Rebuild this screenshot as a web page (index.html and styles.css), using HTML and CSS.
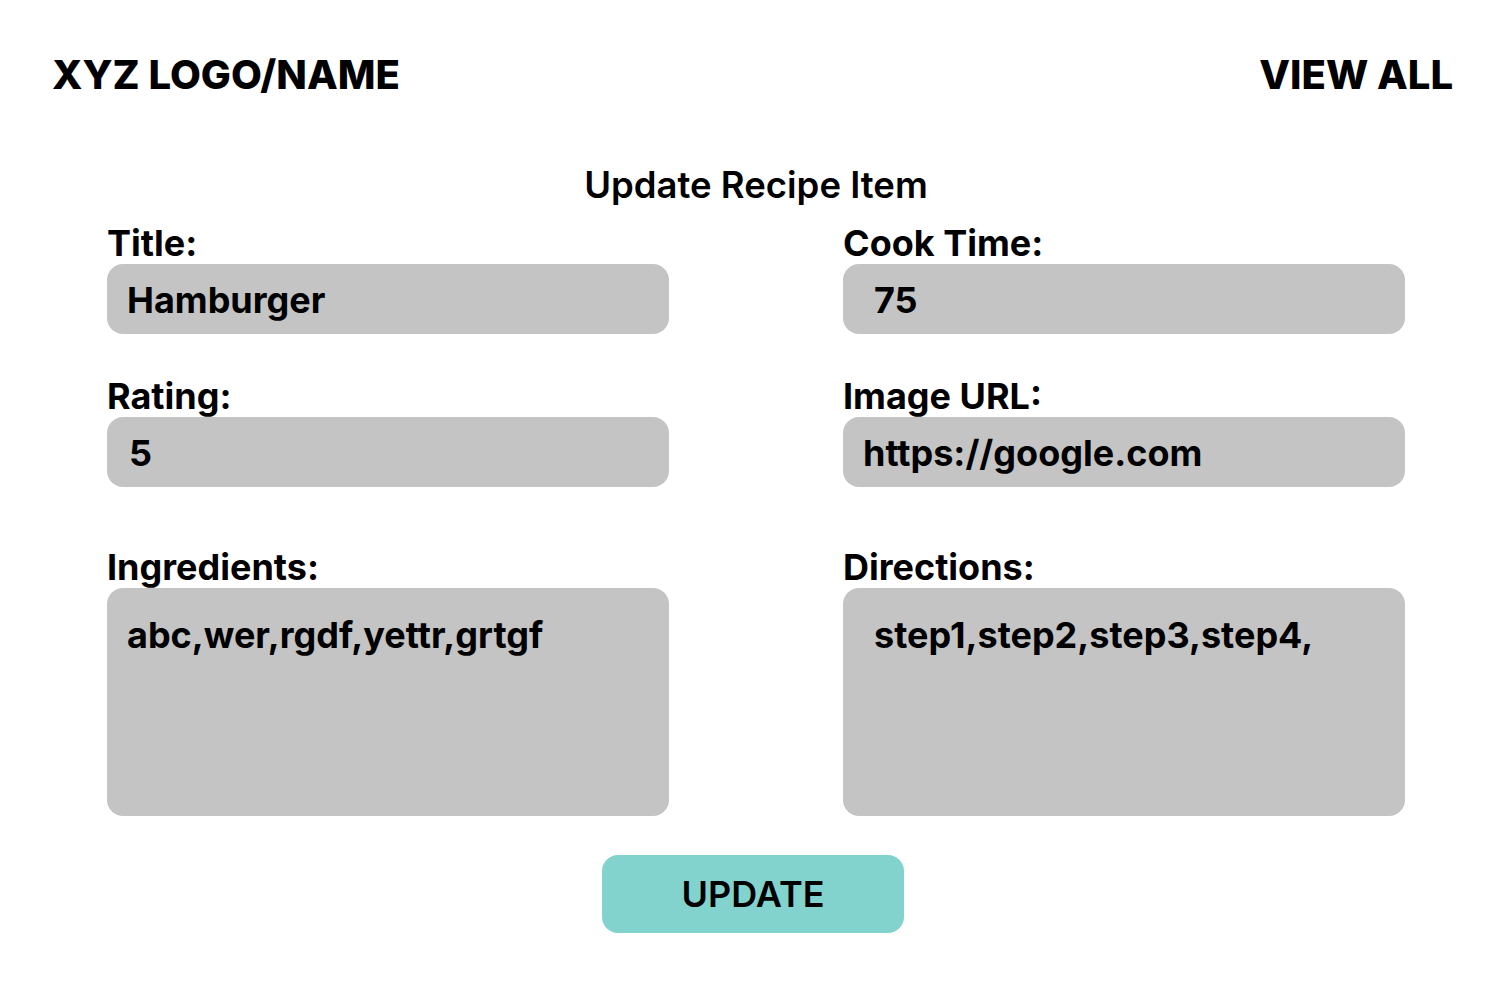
FILE: index.html
```html
<!DOCTYPE html>
<html lang="en">
<head>
<meta charset="utf-8">
<title>Update Recipe Item</title>
<link rel="stylesheet" href="styles.css">
</head>
<body>
<header class="topbar">
  <div class="logo">XYZ LOGO/NAME</div>
  <a class="view-all" href="#">VIEW ALL</a>
</header>
<main class="page">
  <h1 class="form-title">Update Recipe Item</h1>
  <form class="recipe-form">
    <div class="field">
      <label class="label">Title:</label>
      <div class="input">Hamburger</div>
    </div>
    <div class="field">
      <label class="label">Cook Time:</label>
      <div class="input input-wide">75</div>
    </div>
    <div class="field">
      <label class="label">Rating:</label>
      <div class="input input-num">5</div>
    </div>
    <div class="field">
      <label class="label">Image URL:</label>
      <div class="input">https://google.com</div>
    </div>
    <div class="field field-area">
      <label class="label">Ingredients:</label>
      <div class="input textarea">abc,wer,rgdf,yettr,grtgf</div>
    </div>
    <div class="field field-area">
      <label class="label">Directions:</label>
      <div class="input textarea input-wide">step1,step2,step3,step4,</div>
    </div>
  </form>
  <div class="actions">
    <button class="btn" type="button">UPDATE</button>
  </div>
</main>
</body>
</html>
```

FILE: styles.css
```css
* { box-sizing: border-box; }
html, body { margin: 0; padding: 0; background: #ffffff; }
body {
  font-family: Inter, "Noto Sans", sans-serif;
  color: #000;
}
.topbar {
  display: flex;
  justify-content: space-between;
  align-items: center;
  padding: 55px 59px 0 52px;
}
.logo, .view-all {
  font-family: Inter, sans-serif;
  font-weight: 800;
  font-size: 40px;
  line-height: 39px;
  color: #000;
  text-decoration: none;
}
.page {
  padding: 0 107px;
}
.form-title {
  margin: 73px 0 0;
  text-align: center;
  font-family: Inter, sans-serif;
  font-weight: 600;
  font-size: 36.5px;
  line-height: 36px;
}
.recipe-form {
  display: grid;
  grid-template-columns: 562px 562px;
  column-gap: 174px;
  margin-top: 22px;
}
.field {
  display: flex;
  flex-direction: column;
}
.label {
  font-family: Inter, sans-serif;
  font-weight: 700;
  font-size: 36px;
  line-height: 36px;
  margin-bottom: 3px;
}
.input {
  height: 70px;
  background: #c4c4c4;
  border-radius: 16px;
  font-family: Inter, sans-serif;
  font-weight: 700;
  font-size: 36px;
  display: flex;
  align-items: center;
  padding: 2px 0 0 20px;
  margin-bottom: 44px;
}
.input-wide { padding-left: 31px; }
.input-num { padding-left: 22px; }
.textarea {
  height: 228px;
  align-items: flex-start;
  padding-top: 25px;
  margin-bottom: 0;
}
.field-area { margin-top: 18px; }
.actions {
  display: flex;
  justify-content: center;
  margin-top: 39px;
}
.btn {
  width: 302px;
  height: 78px;
  margin-right: 6px;
  border: none;
  border-radius: 16px;
  background: #82d3ce;
  font-family: Inter, sans-serif;
  font-weight: 600;
  font-size: 36px;
  color: #000;
  padding: 0;
}
```
